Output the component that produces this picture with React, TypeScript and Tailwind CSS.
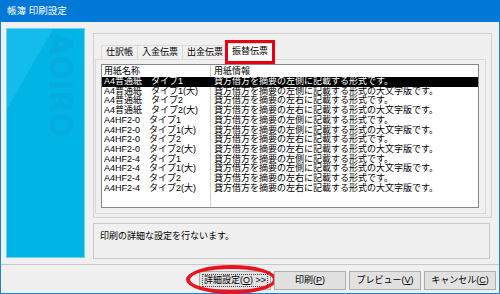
import React from "react";

const rows = [
  ["A4普通紙　タイプ1", "貸方借方を摘要の左側に記載する形式です。"],
  ["A4普通紙　タイプ1(大)", "貸方借方を摘要の左側に記載する形式の大文字版です。"],
  ["A4普通紙　タイプ2", "貸方借方を摘要の左右に記載する形式です。"],
  ["A4普通紙　タイプ2(大)", "貸方借方を摘要の左右に記載する形式の大文字版です。"],
  ["A4HF2-0　タイプ1", "貸方借方を摘要の左側に記載する形式です。"],
  ["A4HF2-0　タイプ1(大)", "貸方借方を摘要の左側に記載する形式の大文字版です。"],
  ["A4HF2-0　タイプ2", "貸方借方を摘要の左右に記載する形式です。"],
  ["A4HF2-0　タイプ2(大)", "貸方借方を摘要の左右に記載する形式の大文字版です。"],
  ["A4HF2-4　タイプ1", "貸方借方を摘要の左側に記載する形式です。"],
  ["A4HF2-4　タイプ1(大)", "貸方借方を摘要の左側に記載する形式の大文字版です。"],
  ["A4HF2-4　タイプ2", "貸方借方を摘要の左右に記載する形式です。"],
  ["A4HF2-4　タイプ2(大)", "貸方借方を摘要の左右に記載する形式の大文字版です。"],
];

const tabs = ["仕訳帳", "入金伝票", "出金伝票"];

function Btn({ label, k, tail, focused }: { label: string; k: string; tail?: string; focused?: boolean }) {
  return (
    <div className="relative w-[72px] h-[19px] bg-[#e1e1e1] border border-[#adadad] flex items-center justify-center">
      {focused && <div className="absolute inset-[2px] border border-dotted border-[#444]" />}
      <span>
        {label}(<span className="underline">{k}</span>){tail}
      </span>
      {focused && (
        <div className="absolute -left-[14px] -right-[7px] -top-[7px] -bottom-[5px] rounded-[50%] border-[4px] border-[#e8141e]" />
      )}
    </div>
  );
}

export default function App() {
  return (
    <div
      className="w-[500px] h-[294px] flex flex-col overflow-hidden text-[9px] text-black bg-[#f0f0f0]"
      style={{ fontFamily: '"Liberation Sans", "Noto Sans CJK JP", sans-serif' }}
    >
      {/* title bar */}
      <div className="h-[22px] bg-[#0078d7] flex items-center pl-[7px] text-white text-[9.5px]">帳簿 印刷設定</div>

      <div className="flex-1 flex flex-col border-x border-b border-[#1883d7]">
        <div className="flex pt-[6px] pl-[5px]">
          {/* side image */}
          <div className="relative w-[79px] h-[230px] bg-[#00b4e6] border border-[#6fd0f0] overflow-hidden">
            <div className="absolute inset-0 bg-[#14bceb] [clip-path:polygon(0_0,46px_0,0_80px)]" />
            <div
              className="absolute left-[2px] top-[38px] w-[104px] h-[36px] rotate-90 flex items-center justify-center text-[#05acdf] font-bold text-[32px] leading-none"
              style={{ fontFamily: '"DejaVu Sans Condensed", "DejaVu Sans", sans-serif' }}
            >
              AOIRO
            </div>
          </div>

          <div className="ml-[8px] flex flex-col">
            {/* tab frame */}
            <div className="mt-[5px] w-[399px] h-[185px] border border-[#d0d0d0] pt-[8px] pl-[1px]">
              <div className="flex items-end h-[17px] pl-[6px]">
                {tabs.map((t) => (
                  <div key={t} className="h-[14px] px-[4px] border-t border-l border-[#d9d9d9] flex items-center bg-[#f0f0f0]">
                    {t}
                  </div>
                ))}
                <div className="relative h-[17px] -mb-[1px] px-[4px] border-x border-t border-[#d9d9d9] bg-white flex items-center z-10">
                  振替伝票
                  <div className="absolute -left-[3px] -right-[3px] -top-[4px] -bottom-[4px] border-[3px] border-[#e60012]" />
                </div>
              </div>
              <div className="w-[391px] h-[155px] border border-[#d9d9d9] pl-[5px] pt-[4px]">
                <div className="w-[378px] h-[144px] bg-white border border-[#828790] flex flex-col">
                  <div className="flex h-[12px]">
                    <div className="w-[109px] h-full pl-[2px] border-r border-[#d0d0d0] leading-[12px]">用紙名称</div>
                    <div className="pl-[3px] leading-[12px] h-full">用紙情報</div>
                  </div>
                  {rows.map((r, i) => (
                    <div key={i} className={`flex h-[9.73px] whitespace-nowrap ${i === 0 ? "bg-black text-white" : ""}`}>
                      <div className={`w-[109px] h-full pl-[2px] border-r leading-[9.73px] ${i === 0 ? "border-black" : "border-[#d0d0d0]"}`}>
                        {r[0]}
                      </div>
                      <div className="flex-1 h-full pl-[3px] leading-[9.73px]">{r[1]}</div>
                    </div>
                  ))}
                  <div className="flex-1 flex">
                    <div className="w-[109px] border-r border-[#d0d0d0]" />
                  </div>
                </div>
              </div>
            </div>

            {/* status */}
            <div className="mt-[5px] w-[397px] h-[36px] border border-[#c8c8c8] pl-[6px] pt-[6px]">印刷の詳細な設定を行ないます。</div>
          </div>
        </div>

        <div className="mt-[5px] border-t border-[#c8c8c8]" />

        <div className="mt-[6px] flex justify-end gap-[3px] pr-[3px]">
          <Btn label="詳細設定" k="O" tail=" >>" focused />
          <Btn label="印刷" k="P" />
          <Btn label="プレビュー" k="V" />
          <Btn label="キャンセル" k="C" />
        </div>
      </div>
    </div>
  );
}
